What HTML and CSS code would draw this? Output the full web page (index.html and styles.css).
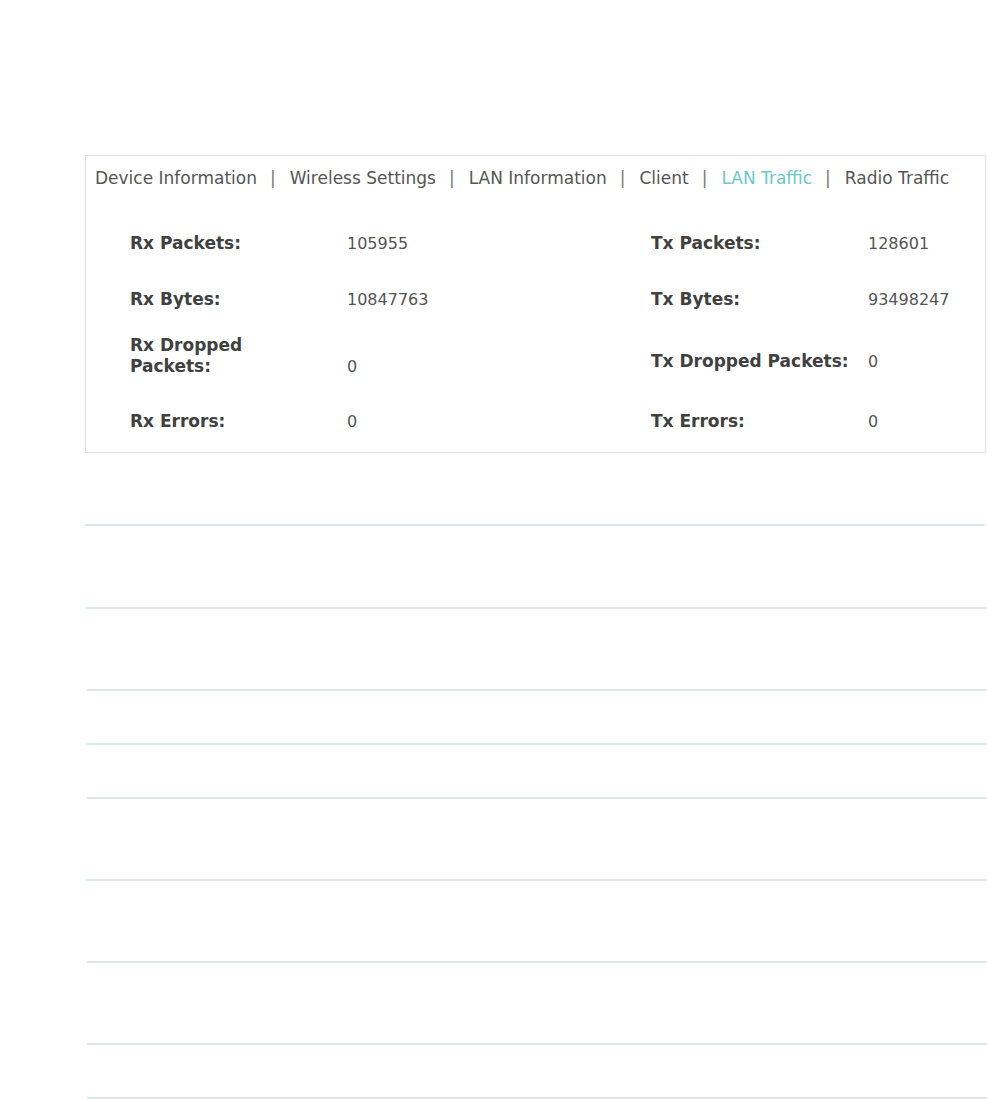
FILE: index.html
```html
<!DOCTYPE html>
<html lang="en">

<head>
    <meta charset="UTF-8">
    <meta name="viewport" content="width=device-width, initial-scale=1.0">
    <title>LAN Traffic</title>
    <link rel="stylesheet" href="styles.css">
</head>

<body>
    <div class="page">
        <div class="panel">
            <div class="tabs">
                <span class="tab">Device Information</span><span class="sep">|</span><span class="tab">Wireless Settings</span><span class="sep">|</span><span class="tab">LAN Information</span><span class="sep">|</span><span class="tab">Client</span><span class="sep">|</span><span class="tab active">LAN Traffic</span><span class="sep">|</span><span class="tab">Radio Traffic</span>
            </div>

            <div class="stats">
                <div class="label">Rx Packets:</div>
                <div class="value">105955</div>
                <div class="label">Tx Packets:</div>
                <div class="value">128601</div>

                <div class="label">Rx Bytes:</div>
                <div class="value">10847763</div>
                <div class="label">Tx Bytes:</div>
                <div class="value">93498247</div>

                <div class="label wrap">Rx Dropped<br>Packets:</div>
                <div class="value low">0</div>
                <div class="label">Tx Dropped Packets:</div>
                <div class="value">0</div>

                <div class="label">Rx Errors:</div>
                <div class="value">0</div>
                <div class="label">Tx Errors:</div>
                <div class="value">0</div>
            </div>
        </div>

        <div class="fields">
            <div class="field"></div>
            <div class="field"></div>
            <div class="field short"></div>
            <div class="field short"></div>
            <div class="field"></div>
            <div class="field"></div>
            <div class="field"></div>
            <div class="field short"></div>
            <div class="field end"></div>
        </div>
    </div>
</body>

</html>
```

FILE: styles.css
```css
* {
    margin: 0;
    padding: 0;
    box-sizing: border-box;
}

body {
    background-color: #fff;
    font-family: "DejaVu Sans", Verdana, sans-serif;
    color: #555;
}

.page {
    padding-left: 85px;
    padding-top: 155px;
    width: 987px;
}

.panel {
    width: 901px;
    border: 1px solid #e0e0e0;
    padding-bottom: 5px;
}

.tabs {
    padding: 12px 0 0 9px;
    font-size: 17px;
    line-height: 21px;
    white-space: nowrap;
    color: #555;
}

.tab.active {
    color: #6bc8cc;
}

.sep {
    padding: 0 14px 0 13px;
    color: #777;
}

.stats {
    margin-top: 26px;
    padding-left: 44px;
    display: grid;
    grid-template-columns: 217px 304px 217px auto;
    grid-template-rows: 56px 56px 68px 52px;
    align-items: center;
}

.label {
    font-size: 17px;
    font-weight: bold;
    line-height: 21px;
    color: #404040;
}

.label.wrap {
    margin-bottom: 10px;
}

.value {
    font-size: 16px;
    line-height: 21px;
    color: #555;
}

.value.low {
    margin-top: 10px;
}

.fields {
    margin-top: 71px;
}

.field {
    height: 82px;
    border-top: 2px solid #dde6e7;
    margin-left: 2px;
    width: 900px;
}

.field:first-child {
    height: 83px;
    margin-left: 0;
}

.field.short {
    height: 54px;
}

.field.end {
    height: 2px;
}
```
